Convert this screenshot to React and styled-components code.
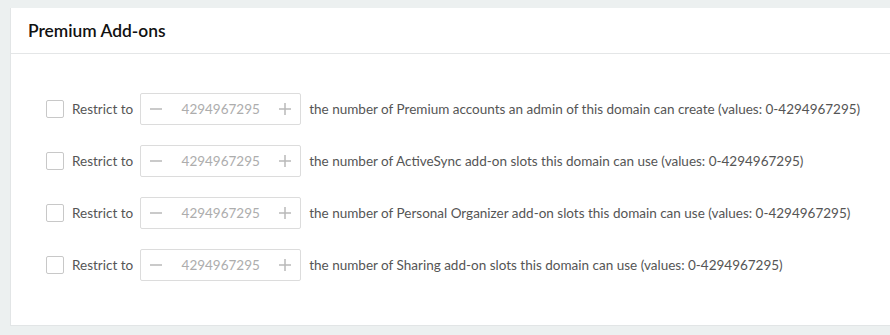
import styled, { createGlobalStyle } from "styled-components";

const GlobalStyle = createGlobalStyle`
  html, body {
    margin: 0;
    padding: 0;
    background: #ecf0f0;
    font-family: Lato, "Liberation Sans", sans-serif;
  }
`;

const StPage = styled.div`
  padding: 8px 0 0 10px;
  height: 335px;
  box-sizing: border-box;
  overflow: hidden;
`;
const StCard = styled.section`
  background: #fff;
  border: 1px solid #e2e5e6;
  border-right: none;
  border-top: none;
  height: 318px;
  box-sizing: border-box;
`;
const StHeader = styled.h2`
  margin: 0;
  height: 45px;
  display: flex;
  align-items: center;
  padding-left: 17px;
  font-size: 17.4px;
  font-weight: 600;
  color: #111;
  border-bottom: 1px solid #e4e6e7;
`;
const StBody = styled.div`
  display: flex;
  flex-direction: column;
  gap: 20px;
  padding: 39px 0 0 35px;
`;
const StRow = styled.div`
  display: flex;
  align-items: center;
  height: 32px;
  font-size: 13.5px;
  color: #555;
`;
const StCheck = styled.span`
  width: 16px;
  height: 16px;
  border: 1px solid #c8c8c8;
  border-radius: 2px;
  margin-right: 8px;
`;
const StLabel = styled.span`
  margin-right: 7px;
`;
const StSpinner = styled.div`
  width: 161px;
  height: 32px;
  box-sizing: border-box;
  border: 1px solid #dcdcdc;
  border-radius: 2px;
  display: flex;
  align-items: center;
  justify-content: space-between;
  padding: 0 9px 0 9px;
  margin-right: 8px;
`;
const StValue = styled.span`
  color: #adadad;
  font-size: 13.5px;
`;

const StepIcon = ({ plus }) => (
  <svg width="12" height="12" viewBox="0 0 12 12">
    <path d="M0 6h12" stroke="#b8b8b8" strokeWidth="1.5" />
    {plus && <path d="M6 0v12" stroke="#b8b8b8" strokeWidth="1.5" />}
  </svg>
);

const rows = [
  "the number of Premium accounts an admin of this domain can create (values: 0-4294967295)",
  "the number of ActiveSync add-on slots this domain can use (values: 0-4294967295)",
  "the number of Personal Organizer add-on slots this domain can use (values: 0-4294967295)",
  "the number of Sharing add-on slots this domain can use (values: 0-4294967295)",
];

const App = () => {
  return (
    <StPage>
      <GlobalStyle />
      <StCard>
        <StHeader>Premium Add-ons</StHeader>
        <StBody>
          {rows.map((text) => (
            <StRow key={text}>
              <StCheck />
              <StLabel>Restrict to</StLabel>
              <StSpinner>
                <StepIcon />
                <StValue>4294967295</StValue>
                <StepIcon plus />
              </StSpinner>
              <span>{text}</span>
            </StRow>
          ))}
        </StBody>
      </StCard>
    </StPage>
  );
};

export default App;
